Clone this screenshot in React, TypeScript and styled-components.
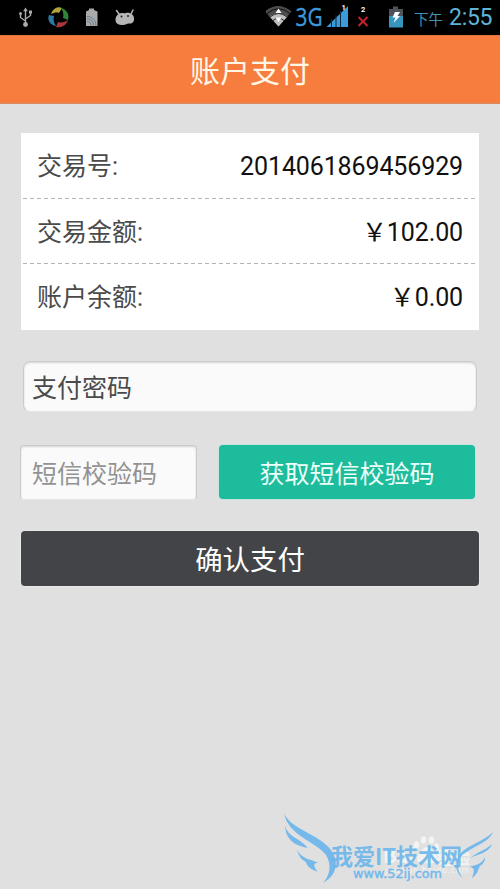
import React from "react";
import styled, { createGlobalStyle } from "styled-components";

const GlobalStyle = createGlobalStyle`
  * { box-sizing: border-box; }
  body {
    margin: 0;
    background: #e0e0e0;
    font-family: Roboto, "Noto Sans CJK SC", sans-serif;
  }
  button, input { font: inherit; }
`;

const Screen = styled.div`
  position: relative;
  width: 500px;
  height: 889px;
  overflow: hidden;
  background: #e0e0e0;
`;

const StatusBar = styled.div`
  display: flex;
  align-items: center;
  justify-content: space-between;
  height: 35px;
  background: #000;
`;

const Clock = styled.div`
  display: flex;
  align-items: baseline;
  gap: 6px;
  width: 86px;
  height: 35px;
  line-height: 35px;
  color: #5fb4d8;
  font-size: 23px;
  letter-spacing: -0.3px;
  white-space: nowrap;
`;

const Period = styled.span`
  font-size: 14.5px;
  letter-spacing: 0;
  color: #4391b5;
`;

const Indicators = styled.div`
  display: flex;
`;

const Header = styled.header`
  display: flex;
  align-items: center;
  justify-content: center;
  height: 69px;
  padding-bottom: 2px;
  background: #f67d3d;
  border-top: 1px solid #e0743c;
  border-bottom: 1px solid #d98a63;
  color: #fff6e6;
  font-size: 30px;
`;

const Content = styled.main`
  padding: 29px 21px 0;
`;

const Details = styled.section`
  height: 197px;
  padding: 0 2px;
  background: #fff;
`;

const Row = styled.div<{ $divided?: boolean }>`
  display: flex;
  align-items: center;
  justify-content: space-between;
  height: 65.5px;
  padding: 3px 14px 0;
  font-size: 25px;
  line-height: 36px;
  background: ${(p) =>
    p.$divided
      ? "repeating-linear-gradient(90deg, #b4b4b4 0 4px, #fff 4px 7px) 0 100% / 100% 1px no-repeat"
      : "none"};
`;

const Label = styled.span`
  color: #4a4a4a;
`;

const Value = styled.span`
  color: #111;
  letter-spacing: -0.12px;
`;

const Field = styled.input<{ $hint: string; $radius: number; $inset: number }>`
  display: block;
  width: 100%;
  height: 100%;
  padding: 3px 10px 0 ${(p) => p.$inset}px;
  border: 1px solid #cbcbcb;
  border-bottom-color: #e6e6e6;
  border-radius: ${(p) => p.$radius}px;
  outline: 0;
  background: #fafafa;
  box-shadow: inset 0 1px 2px #d2d2d2;
  font-size: 25px;
  &::placeholder { color: ${(p) => p.$hint}; opacity: 1; }
`;

const PasswordSlot = styled.div`
  height: 51px;
  margin: 31px 2px 0;
`;

const CodeRow = styled.div`
  display: grid;
  grid-template-columns: 177px 256px;
  gap: 22px;
  height: 55px;
  margin: 33px 0 0 -1px;
`;

const Button = styled.button<{ $tone: "teal" | "dark" }>`
  width: 100%;
  height: ${(p) => (p.$tone === "teal" ? 54 : 55)}px;
  padding: 0 0 1px;
  border: 0;
  border-radius: 4px;
  color: ${(p) => (p.$tone === "teal" ? "#edfff9" : "#fff")};
  background: ${(p) => (p.$tone === "teal" ? "#1dbc9c" : "#434447")};
  box-shadow: 0 0 1px 1px ${(p) => (p.$tone === "teal" ? "#c4e6de" : "#e8e8e8")};
  font-size: ${(p) => (p.$tone === "teal" ? 25 : 27.4)}px;
`;

const SubmitSlot = styled.div`
  margin-top: 31px;
`;

const Watermark = styled.svg`
  position: absolute;
  right: 0;
  bottom: 0;
`;

function Notifications() {
  return (
    <svg width="160" height="35" viewBox="0 0 160 35">
      <path d="M25.500 10v14M25.500 21l-5-3.500v-4M25.500 19l5-3.500v-3" fill="none" stroke="#aaa" strokeWidth="1.400" />
      <g fill="#aaa">
        <path d="M25.500 7.500l2.300 3.700h-4.600z" />
        <circle cx="25.500" cy="24.500" r="2.400" />
        <circle cx="20.500" cy="13.500" r="1.500" />
        <path d="M29 10.500h3v3h-3z" />
      </g>
      <path d="M51 14C53 8 58 6 62 8l-3 5c-3-1-5 0-8 1z" fill="#b3a23a" />
      <path d="M61 8c5 1 9 6 7 12l-5-2c1-4 0-7-2-10z" fill="#31853b" />
      <path d="M68 20c-2 6-7 8-12 7l2-5c4 1 7 0 10-2z" fill="#a8363a" />
      <path d="M56 26c-6-1-9-6-7-11l5 1c-1 4 0 7 2 10z" fill="#2c79a5" />
      <path d="M86 11.500l3-1.500v-1.500h5V10l3.500 1.500V26H86z" fill="#a9aaab" />
      <path d="M87 16.500c5 0 9 3.500 9 9M87 19c4 0 6.500 2.500 6.500 6.500M87 21.500c2.500 0 4 1.500 4 4" fill="none" stroke="#637b91" />
      <path d="M115.500 20c0-4 3-7 6-7 2 0 3 .5 4.500 0 4-1 8 2 8 5 .5 4-2 6-5 5.500-2-.3-3 1.500-6 1.500-4 0-7.500-1-7.500-5z" fill="#b5b5b5" />
      <path d="M119 14l-2.500-3.500M131 14l2-4" stroke="#b5b5b5" strokeWidth="1.500" strokeLinecap="round" />
      <circle cx="121.500" cy="16.500" r="1" fill="#222" />
      <circle cx="128" cy="16" r="1" fill="#222" />
    </svg>
  );
}

function Radio() {
  return (
    <svg width="148" height="35" viewBox="266 0 148 35">
      <path d="M264.800 11.500Q278 .5 291.500 11.500L278.500 26.500z" fill="#4c4c4c" />
      <path d="M269.500 16.500Q278 9.500 287.500 16.500L278.500 26.500z" fill="#bdbdbd" />
      <path d="M267 13.500Q278.500 4 290 13.500M270 17Q278.500 10 287 17M273 20.500Q278.500 16 284 20.500" fill="none" stroke="#000" strokeWidth=".8" />
      <path d="M278.500 8.500l3 4.500h-6zM278.500 22l3-4.500h-6z" fill="#fff" />
      <text x="295.500" y="26" fontFamily="Open Sans" fontSize="25.500" fill="#3b9ada" stroke="#3b9ada" strokeWidth=".4" textLength="27" lengthAdjust="spacingAndGlyphs">3G</text>
      <path d="M326.500 27L348 6v21z" fill="#3b9ada" />
      <path d="M331.500 19v8M336 15v12M340.500 11v16" stroke="#10283c" />
      <g fontFamily="Roboto" fontSize="7.500" fontWeight="700" fill="#fff">
        <text x="341.500" y="9.500">1</text>
        <text x="361" y="11.500">2</text>
      </g>
      <path d="M358.500 17l9 9M367.500 17l-9 9" stroke="#c32430" strokeWidth="2" />
      <path d="M393 6.500h5V9h5v7h-14V9h4z" fill="#4d5358" />
      <path d="M389 16h14v11.500h-14z" fill="#3794bd" />
      <path d="M395 12h5l-2.500 4h2.500l-6.500 7 2-5.500h-3z" fill="#fff" />
    </svg>
  );
}

function SiteMark() {
  return (
    <Watermark width="230" height="89" viewBox="0 0 230 89">
      <g fill="#f3f3f3">
        <ellipse cx="146.500" cy="45" rx="2.700" ry="3.800" />
        <ellipse cx="153.500" cy="40" rx="2.700" ry="3.800" />
        <ellipse cx="161.500" cy="40" rx="2.700" ry="3.800" />
        <ellipse cx="166.500" cy="47" rx="2.700" ry="3.800" />
        <path d="M157 47c4 0 10 8 10 12s-5 5-10 4c-6 1-10 0-10-4s6-12 10-12z" />
        <g fontFamily="Noto Sans CJK SC" fontWeight="700">
          <text x="113" y="63" fontSize="20">Bai</text>
          <text x="166" y="64" fontSize="17">经验</text>
          <text x="115" y="73" fontSize="8" fontWeight="400" textLength="84">jingyan.baidu.com</text>
        </g>
      </g>
      <g fill="#6db6eb" fillOpacity=".93">
        <path d="M14 13C20 29 49 34 61 50C70 63 66 76 53 83C60 75 62 65 56 55C47 42 18 36 14 13z" />
        <path d="M15 26C18 37 30 38 38 48C28 46 16 42 15 26z" />
        <path d="M27 50C32 59 40 59 49 63C43 62 43 67 48 72C40 69 37 66 36 62C32 60 29 57 27 50z" />
        <path d="M223 32C219 42 206 45 195 53C185 60 187 71 193 78C183 72 185 57 194 50C206 42 215 40 223 32z" />
        <path d="M222 44C219 53 208 54 200 58C207 52 216 50 222 44z" />
        <path d="M215 57C212 64 206 65 199 67C206 67 204 72 202 78C208 74 208 69 210 66C214 63 215 61 215 57z" />
        <text x="61" y="65" fontFamily="Noto Sans CJK SC" fontSize="22.500" fontWeight="700" textLength="131" lengthAdjust="spacingAndGlyphs">我爱IT技术网</text>
        <text x="83" y="78" fontFamily="DejaVu Sans" fontSize="12" stroke="#6db6eb" strokeWidth=".4" textLength="89" lengthAdjust="spacingAndGlyphs">www.52ij.com</text>
      </g>
    </Watermark>
  );
}

const details = [
  { label: "交易号:", value: "2014061869456929" },
  { label: "交易金额:", value: "\uFFE5102.00" },
  { label: "账户余额:", value: "\uFFE50.00" },
];

export default function App() {
  return (
    <Screen>
      <GlobalStyle />
      <StatusBar>
        <Notifications />
        <Indicators>
          <Radio />
          <Clock>
            <Period>下午</Period>
            <span>2:55</span>
          </Clock>
        </Indicators>
      </StatusBar>
      <Header>账户支付</Header>
      <Content>
        <Details>
          {details.map((d, i) => (
            <Row key={d.label} $divided={i < details.length - 1}>
              <Label>{d.label}</Label>
              <Value>{d.value}</Value>
            </Row>
          ))}
        </Details>
        <PasswordSlot>
          <Field $hint="#4a4a4a" $radius={7} $inset={8} type="password" placeholder="支付密码" />
        </PasswordSlot>
        <CodeRow>
          <Field $hint="#929292" $radius={4} $inset={11} placeholder="短信校验码" />
          <Button $tone="teal">获取短信校验码</Button>
        </CodeRow>
        <SubmitSlot>
          <Button $tone="dark">确认支付</Button>
        </SubmitSlot>
      </Content>
      <SiteMark />
    </Screen>
  );
}
